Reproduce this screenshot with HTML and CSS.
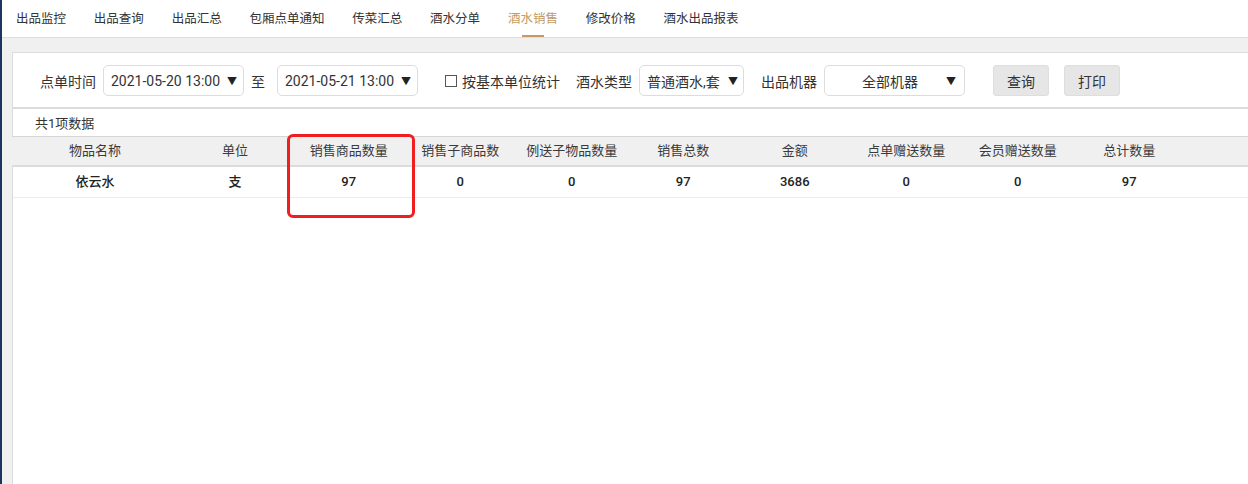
FILE: index.html
```html
<!DOCTYPE html>
<html>
<head>
    <meta charset="utf-8">
    <title>酒水销售</title>
    <link rel="stylesheet" href="styles.css">
</head>
<body>
    <div class="app">
        <div class="edge"></div>
        <div class="main">
            <div class="tabs">
                <span class="tab">出品监控</span>
                <span class="tab">出品查询</span>
                <span class="tab">出品汇总</span>
                <span class="tab">包厢点单通知</span>
                <span class="tab">传菜汇总</span>
                <span class="tab">酒水分单</span>
                <span class="tab active">酒水销售</span>
                <span class="tab">修改价格</span>
                <span class="tab">酒水出品报表</span>
            </div>
            <div class="content">
                <div class="filter">
                    <span class="label">点单时间</span>
                    <div class="select date"><span>2021-05-20 13:00</span><i>▼</i></div>
                    <span class="label to">至</span>
                    <div class="select date"><span>2021-05-21 13:00</span><i>▼</i></div>
                    <label class="check"><span class="box"></span>按基本单位统计</label>
                    <span class="label">酒水类型</span>
                    <div class="select type"><span>普通酒水,套</span><i>▼</i></div>
                    <span class="label machine">出品机器</span>
                    <div class="select all"><span>全部机器</span><i>▼</i></div>
                    <button class="btn first">查询</button>
                    <button class="btn">打印</button>
                </div>
                <div class="summary">共1项数据</div>
                <div class="table">
                    <div class="row head">
                        <div class="c c1">物品名称</div>
                        <div class="c c2">单位</div>
                        <div class="c">销售商品数量</div>
                        <div class="c">销售子商品数</div>
                        <div class="c">例送子物品数量</div>
                        <div class="c">销售总数</div>
                        <div class="c">金额</div>
                        <div class="c">点单赠送数量</div>
                        <div class="c">会员赠送数量</div>
                        <div class="c">总计数量</div>
                    </div>
                    <div class="body">
                        <div class="row data">
                            <div class="c c1">依云水</div>
                            <div class="c c2">支</div>
                            <div class="c">97</div>
                            <div class="c">0</div>
                            <div class="c">0</div>
                            <div class="c">97</div>
                            <div class="c">3686</div>
                            <div class="c">0</div>
                            <div class="c">0</div>
                            <div class="c">97</div>
                        </div>
                    </div>
                    <div class="mark"></div>
                </div>
            </div>
        </div>
    </div>
</body>
</html>
```

FILE: styles.css
```css
body {
    margin: 0;
    font-family: Roboto, "Noto Sans CJK SC", sans-serif;
    font-size: 13px;
    color: #333;
    background: #fff;
}
.app {
    display: flex;
    height: 484px;
    overflow: hidden;
}
.edge {
    width: 2px;
    background: #1d3461;
}
.main {
    flex: 1;
    display: flex;
    flex-direction: column;
}
.tabs {
    height: 37px;
    border-bottom: 1px solid #dcdcdc;
    display: flex;
    align-items: center;
    gap: 27.8px;
    padding-left: 14px;
    font-size: 12.5px;
}
.tab {
    position: relative;
    line-height: 37px;
}
.tab.active {
    color: #c49b63;
}
.tab.active::after {
    content: "";
    position: absolute;
    left: 14px;
    width: 22px;
    bottom: 0;
    height: 2px;
    background: #c49b63;
}
.content {
    flex: 1;
    background: #f0f0f0;
    padding: 14px 0 0 10px;
    display: flex;
    flex-direction: column;
}
.filter {
    height: 54px;
    background: #fff;
    border: 1px solid #dcdcdc;
    border-right: none;
    border-bottom: 2px solid #dcdcdc;
    display: flex;
    align-items: center;
    padding-left: 27px;
    padding-top: 1px;
    box-sizing: border-box;
    height: 57px;
    font-size: 14px;
}
.label {
    margin-right: 7px;
}
.label.to {
    margin-left: 7px;
    margin-right: 12px;
}
.select {
    height: 31px;
    box-sizing: border-box;
    border: 1px solid #dcdcdc;
    border-radius: 5px;
    display: flex;
    align-items: center;
    padding: 0 6px 0 7px;
    overflow: hidden;
    white-space: nowrap;
}
.select i {
    font-style: normal;
    font-size: 10px;
    margin-left: auto;
    color: #222;
}
.select.date {
    width: 141px;
}
.check {
    display: flex;
    align-items: center;
    margin-left: 27px;
    margin-right: 16px;
}
.box {
    width: 10px;
    height: 10px;
    border: 1px solid #555;
    margin-right: 5px;
}
.select.type {
    width: 105px;
    padding-right: 5px;
}
.select.type span {
    overflow: hidden;
    width: 86px;
}
.label.machine {
    margin-left: 17px;
    margin-right: 7px;
}
.select.all {
    width: 141px;
    padding: 0 8px 0 37px;
}
.btn {
    height: 31px;
    width: 56px;
    border: 1px solid #dedede;
    border-radius: 3px;
    background: #e6e6e6;
    font-family: inherit;
    font-size: 14px;
    color: #333;
    margin-left: 15px;
    padding: 0;
}
.btn.first {
    margin-left: 28px;
}
.summary {
    height: 27px;
    line-height: 29px;
    background: #fff;
    border-left: 1px solid #dcdcdc;
    padding-left: 22px;
}
.table {
    flex: 1;
    display: flex;
    flex-direction: column;
    position: relative;
}
.row {
    display: flex;
    padding-left: 1px;
}
.c {
    width: 111.5px;
    text-align: center;
    flex: none;
}
.c1 {
    width: 164px;
}
.c2 {
    width: 116px;
}
.head {
    height: 28px;
    line-height: 28px;
    border-top: 1px solid #d6d6d6;
    border-bottom: 2px solid #dcdcdc;
    color: #3a3a3a;
}
.body {
    flex: 1;
    background: #fff;
    border-left: 1px solid #dcdcdc;
}
.data {
    height: 30px;
    line-height: 30px;
    border-bottom: 1px solid #ececec;
    padding-left: 0;
    font-weight: 500;
    color: #222;
}
.mark {
    position: absolute;
    left: 275px;
    top: -2px;
    width: 122px;
    height: 78px;
    border: 3px solid #f01e1e;
    border-radius: 6px;
}
```
